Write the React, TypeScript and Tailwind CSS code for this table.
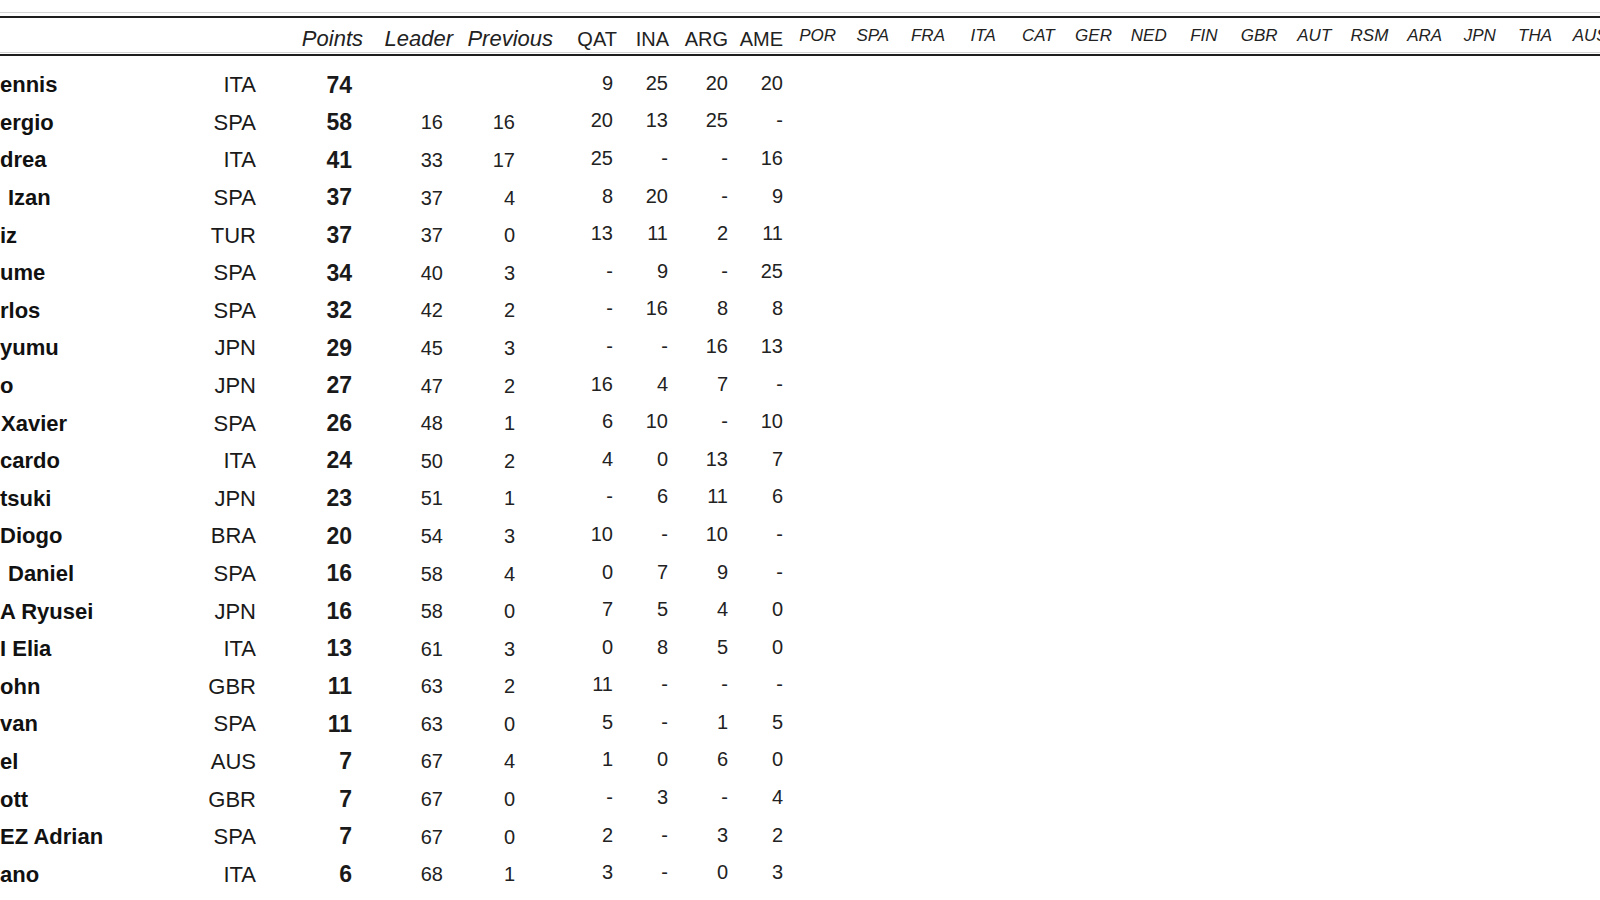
import React from "react";

type Row = {
  name: string;
  indent?: string;
  country: string;
  points: string;
  leader: string;
  previous: string;
  r: string[];
};

const rows: Row[] = [
  { name: "ennis", country: "ITA", points: "74", leader: "", previous: "", r: ["9", "25", "20", "20"] },
  { name: "ergio", country: "SPA", points: "58", leader: "16", previous: "16", r: ["20", "13", "25", "-"] },
  { name: "drea", country: "ITA", points: "41", leader: "33", previous: "17", r: ["25", "-", "-", "16"] },
  { name: "Izan", indent: "pl-[8px]", country: "SPA", points: "37", leader: "37", previous: "4", r: ["8", "20", "-", "9"] },
  { name: "iz", country: "TUR", points: "37", leader: "37", previous: "0", r: ["13", "11", "2", "11"] },
  { name: "ume", country: "SPA", points: "34", leader: "40", previous: "3", r: ["-", "9", "-", "25"] },
  { name: "rlos", country: "SPA", points: "32", leader: "42", previous: "2", r: ["-", "16", "8", "8"] },
  { name: "yumu", country: "JPN", points: "29", leader: "45", previous: "3", r: ["-", "-", "16", "13"] },
  { name: "o", country: "JPN", points: "27", leader: "47", previous: "2", r: ["16", "4", "7", "-"] },
  { name: "Xavier", indent: "pl-[1px]", country: "SPA", points: "26", leader: "48", previous: "1", r: ["6", "10", "-", "10"] },
  { name: "cardo", country: "ITA", points: "24", leader: "50", previous: "2", r: ["4", "0", "13", "7"] },
  { name: "tsuki", country: "JPN", points: "23", leader: "51", previous: "1", r: ["-", "6", "11", "6"] },
  { name: "Diogo", country: "BRA", points: "20", leader: "54", previous: "3", r: ["10", "-", "10", "-"] },
  { name: "Daniel", indent: "pl-[8px]", country: "SPA", points: "16", leader: "58", previous: "4", r: ["0", "7", "9", "-"] },
  { name: "A Ryusei", country: "JPN", points: "16", leader: "58", previous: "0", r: ["7", "5", "4", "0"] },
  { name: "I Elia", country: "ITA", points: "13", leader: "61", previous: "3", r: ["0", "8", "5", "0"] },
  { name: "ohn", country: "GBR", points: "11", leader: "63", previous: "2", r: ["11", "-", "-", "-"] },
  { name: "van", country: "SPA", points: "11", leader: "63", previous: "0", r: ["5", "-", "1", "5"] },
  { name: "el", country: "AUS", points: "7", leader: "67", previous: "4", r: ["1", "0", "6", "0"] },
  { name: "ott", country: "GBR", points: "7", leader: "67", previous: "0", r: ["-", "3", "-", "4"] },
  { name: "EZ Adrian", country: "SPA", points: "7", leader: "67", previous: "0", r: ["2", "-", "3", "2"] },
  { name: "ano", country: "ITA", points: "6", leader: "68", previous: "1", r: ["3", "-", "0", "3"] },
];

const later = ["POR", "SPA", "FRA", "ITA", "CAT", "GER", "NED", "FIN", "GBR", "AUT", "RSM", "ARA", "JPN", "THA", "AUS"];

const raceCols = [
  { w: "w-[64px]", pr: "pr-[4px]" },
  { w: "w-[52px]", pr: "pr-[1px]" },
  { w: "w-[59px]", pr: "pr-0" },
  { w: "w-[55px]", pr: "pr-0" },
];

const raceHeads = ["QAT", "INA", "ARG", "AME"];

export default function App() {
  return (
    <div className="w-[1600px] h-[900px] overflow-hidden bg-white text-[#1a1a1a] font-['Liberation_Sans',Arial,sans-serif]">
      <div className="mt-[12px] h-px bg-[#d4d4d4]" />
      <div className="mt-[3px] h-[2px] bg-[#1e1e1e]" />
      <div className="flex h-[34px] items-center whitespace-nowrap">
        <div className="w-[180px] shrink-0" />
        <div className="w-[76px] shrink-0" />
        <div className="w-[107px] shrink-0 pt-[7px] text-right italic text-[22px] text-[#222]">Points</div>
        <div className="w-[90px] shrink-0 pt-[7px] text-right italic text-[22px] text-[#222]">Leader</div>
        <div className="w-[100px] shrink-0 pt-[7px] text-right italic text-[22px] text-[#222]">Previous</div>
        {raceHeads.map((h, i) => (
          <div key={h} className={`${raceCols[i].w} shrink-0 pt-[7px] text-right text-[20px] text-[#222]`}>
            {h}
          </div>
        ))}
        <div className="w-[7px] shrink-0" />
        {later.map((h, i) => (
          <div key={i} className="w-[55.2px] shrink-0 pt-[1px] text-center italic text-[17px] text-[#222]">
            {h}
          </div>
        ))}
      </div>
      <div className="h-px bg-[#d4d4d4]" />
      <div className="mt-[1px] h-[2px] bg-[#1e1e1e]" />
      <div className="pt-[10px]">
        {rows.map((row, idx) => (
          <div key={idx} className="flex h-[37.6px] items-center whitespace-nowrap">
            <div className="w-[180px] shrink-0 overflow-hidden">
              <div className={`text-[22px] font-bold text-[#111] ${row.indent ?? ""}`}>{row.name}</div>
            </div>
            <div className="w-[76px] shrink-0 text-right text-[22px] text-[#1a1a1a]">{row.country}</div>
            <div className="w-[107px] shrink-0 pr-[11px] text-right text-[23px] font-bold text-[#1a1a1a]">{row.points}</div>
            <div className="w-[90px] shrink-0 pr-[10px] text-right text-[20px] text-[#222]">{row.leader}</div>
            <div className="w-[100px] shrink-0 pr-[38px] text-right text-[20px] text-[#222]">{row.previous}</div>
            {row.r.map((v, i) => (
              <div key={i} className={`${raceCols[i].w} ${raceCols[i].pr} shrink-0 text-right text-[20px] text-[#222] -translate-y-[2px]`}>
                {v}
              </div>
            ))}
          </div>
        ))}
      </div>
    </div>
  );
}
